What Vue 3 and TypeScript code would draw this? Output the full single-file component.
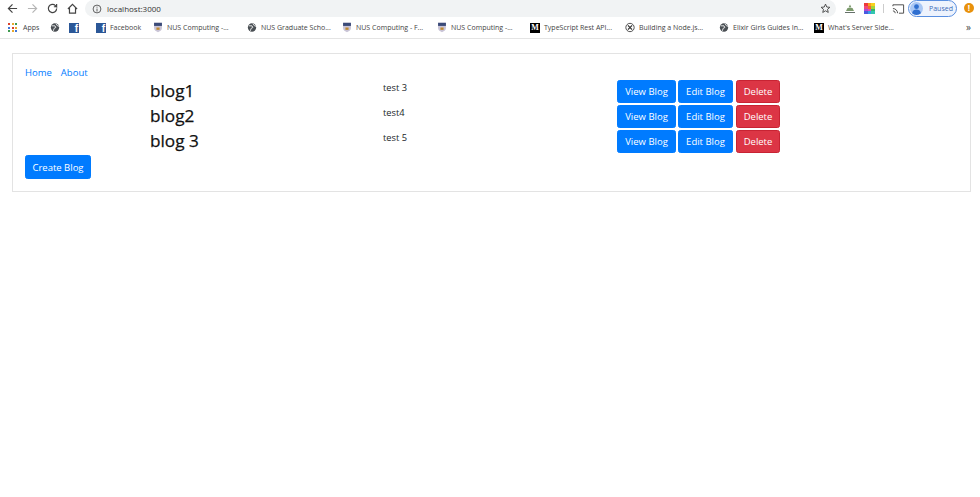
<script setup lang="ts">
interface Blog { title: string; body: string }
interface Mark { label: string; icon: string; width: number }
const blogs: Blog[] = [
  { title: 'blog1', body: 'test 3' },
  { title: 'blog2', body: 'test4' },
  { title: 'blog 3', body: 'test 5' },
]
const marks: Mark[] = [
  { label: 'Facebook', icon: 'fb', width: 57 },
  { label: 'NUS Computing -...', icon: 'nus', width: 94 },
  { label: 'NUS Graduate Scho...', icon: 'globe', width: 95 },
  { label: 'NUS Computing - F...', icon: 'nus', width: 95 },
  { label: 'NUS Computing -...', icon: 'nus', width: 93 },
  { label: 'TypeScript Rest API...', icon: 'm', width: 95 },
  { label: 'Building a Node.js...', icon: 'x', width: 94 },
  { label: 'Elixir Girls Guides In...', icon: 'globe', width: 95 },
  { label: "What's Server Side...", icon: 'm', width: 90 },
]
const appColors: string[] = ['#d9402b', '#e8a92b', '#3f9a4f', '#3f76d9', '#d9402b', '#e8a92b', '#3f9a4f', '#e8a92b', '#3f76d9']
const paletteColors: string[] = ['#ee3a3a', '#f7a01e', '#f7d11e', '#f04a7a', '#f46a2a', '#a6d33a', '#b04ad0', '#e84ab0', '#33b66a', '#4a5ae0', '#3a9ae8', '#33c6b0']
</script>

<template>
  <div class="page">
    <header class="chrome">
      <div class="toolbar">
        <svg class="tool" viewBox="0 0 12 12"><path d="M11 6H1.500M6 1.500 1.500 6 6 10.500" /></svg>
        <svg class="tool faded" viewBox="0 0 12 12"><path d="M1 6h9.500M6 1.500 10.500 6 6 10.500" /></svg>
        <svg class="tool" viewBox="0 0 12 12"><path d="M10.500 6a4.500 4.500 0 1 1-1.300-3.200l1.300 1.300V1M10.500 4.100H7.500" /></svg>
        <svg class="tool" viewBox="0 0 12 12"><path d="M1 6.500 6 1.500l5 5M2.700 5.500v5.500h6.600V5.500" /></svg>
        <div class="omnibox">
          <svg class="info" viewBox="0 0 12 12"><circle cx="6" cy="6" r="4.700" /><path d="M6 5.500V9M6 3.200v1.200" /></svg>
          <span class="url">localhost:3000</span>
          <svg class="star" viewBox="0 0 12 12"><path d="m6 1.200 1.400 3.200 3.400.3-2.600 2.200.8 3.400L6 8.500l-3 1.800.8-3.400L1.200 4.700l3.400-.3z" /></svg>
        </div>
        <svg class="ext" viewBox="0 0 12 12"><path d="m6 1.500 1.500 3h-3zM3.500 5h5l1.500 3H2z" fill="#7c9a6c" /><path d="M1 9.500h10" stroke="#66706a" /></svg>
        <div class="palette"><span v-for="(c, i) in paletteColors" :key="i" :style="{ background: c }"></span></div>
        <span class="divider"></span>
        <svg class="cast" viewBox="0 0 14 12"><path d="M1 3V1.500h11.500v9H7.500M1 5.500a5 5 0 0 1 5 5M1 8a2.500 2.500 0 0 1 2.500 2.500" /></svg>
        <div class="profile">
          <svg class="avatar" viewBox="0 0 14 14"><circle cx="7" cy="7" r="7" fill="#a9c7f5" /><circle cx="7" cy="5" r="2.600" fill="#2f6fd0" /><path d="M2.200 12c.6-3 2.500-4 4.800-4s4.200 1 4.800 4a7 7 0 0 1-9.600 0z" fill="#2f6fd0" /></svg>
          <span>Paused</span>
        </div>
        <span class="alert">!</span>
      </div>
      <div class="bookmarks">
        <div class="apps-grid"><span v-for="(c, i) in appColors" :key="i" :style="{ background: c }"></span></div>
        <span class="apps">Apps</span>
        <svg class="icon spaced" viewBox="0 0 12 12"><circle cx="6" cy="6" r="5" fill="#4a4f54" /><path d="M2 4h4l1 2-2 1-1 3M7 1.500 9 4l2 .5" stroke="#fff" fill="none" /></svg>
        <span class="fb small">f</span>
        <div class="mark" v-for="(m, i) in marks" :key="i" :style="{ width: m.width + 'px' }">
          <span v-if="m.icon === 'fb'" class="fb">f</span>
          <svg v-else-if="m.icon === 'nus'" class="icon" viewBox="0 0 12 14"><path d="M1 1h10v7c0 3-3 4-5 5-2-1-5-2-5-5z" fill="#c9c4d6" /><path d="M1 1h10v4H1z" fill="#3a4a78" /><path d="M4 7h4v3H4z" fill="#c08a30" /></svg>
          <svg v-else-if="m.icon === 'globe'" class="icon" viewBox="0 0 12 12"><circle cx="6" cy="6" r="5" fill="#4a4f54" /><path d="M2 4h4l1 2-2 1-1 3M7 1.500 9 4l2 .5" stroke="#fff" fill="none" /></svg>
          <span v-else-if="m.icon === 'm'" class="medium">M</span>
          <svg v-else class="icon" viewBox="0 0 12 12"><circle cx="6" cy="6" r="5" fill="none" stroke="#333" /><path d="m3.500 3.500 5 5M8.500 3.500l-5 5" stroke="#333" stroke-width="1.500" /></svg>
          <span class="label">{{ m.label }}</span>
        </div>
        <span class="more">»</span>
      </div>
    </header>

    <main class="card">
      <nav class="nav">
        <a href="#">Home</a>
        <a href="#">About</a>
      </nav>
      <div class="rows">
        <div class="row" v-for="b in blogs" :key="b.title">
          <h2>{{ b.title }}</h2>
          <p>{{ b.body }}</p>
          <div class="actions">
            <button class="btn primary">View Blog</button>
            <button class="btn primary">Edit Blog</button>
            <button class="btn danger">Delete</button>
          </div>
        </div>
      </div>
      <button class="btn primary create">Create Blog</button>
    </main>
  </div>
</template>

<style>
html, body { margin: 0; background: #fff; }
</style>

<style scoped>
.page { width: 980px; height: 497px; overflow: hidden; font-family: "Open Sans", "Noto Sans", sans-serif; color: #212529; }
.chrome { height: 39px; box-sizing: border-box; border-bottom: 1px solid #e4e4e4; }
.toolbar { height: 17px; display: flex; align-items: center; padding-left: 7px; position: relative; }
.tool { width: 11px; height: 11px; fill: none; stroke: #444; stroke-width: 1.300; margin-right: 9px; flex: none; }
.tool.faded { stroke: #b5b5b5; }
.omnibox { position: absolute; left: 85px; top: 0; width: 751px; height: 17px; border-radius: 9px; background: #f1f3f4; display: flex; align-items: center; padding-left: 7px; box-sizing: border-box; }
.info { width: 10px; height: 10px; fill: none; stroke: #444; }
.url { margin-left: 5px; font-size: 8px; color: #333; }
.star { width: 11px; height: 11px; fill: none; stroke: #444; position: absolute; right: 5px; top: 3px; }
.ext { position: absolute; left: 844px; top: 3px; width: 12px; height: 12px; }
.palette { position: absolute; left: 864px; top: 3px; width: 11px; height: 11px; display: grid; grid-template-columns: repeat(3, 1fr); grid-auto-rows: 1fr; }
.divider { position: absolute; left: 883px; top: 4px; width: 1px; height: 9px; background: #ccc; }
.cast { position: absolute; left: 892px; top: 3px; width: 13px; height: 12px; fill: none; stroke: #444; }
.profile { position: absolute; left: 908px; top: 0; width: 49px; height: 17px; box-sizing: border-box; border: 1px solid #5a8fe0; border-radius: 9px; background: #eef3fd; display: flex; align-items: center; gap: 6px; padding-left: 1px; font-size: 7px; color: #3a6cb8; }
.avatar { width: 13px; height: 13px; flex: none; }
.alert { position: absolute; left: 964px; top: 3px; width: 10px; height: 10px; border-radius: 50%; background: #e8910c; color: #fff; font-size: 8px; font-weight: 700; line-height: 10px; text-align: center; }
.bookmarks { height: 21px; display: flex; align-items: center; padding-left: 8px; position: relative; font-size: 7px; color: #444; }
.apps-grid { width: 9px; height: 9px; flex: none; display: grid; grid-template-columns: repeat(3, 2px); grid-auto-rows: 2px; gap: 1.500px; margin-right: 6px; }
.apps { width: 16px; margin-right: 11px; flex: none; }
.icon { width: 10px; height: 11px; flex: none; }
.spaced { margin-right: 9px; }
.fb { width: 10px; height: 10px; flex: none; background: #2b5797; color: #fff; font: 700 10px/11px "Liberation Sans", sans-serif; text-align: right; padding-right: 1px; box-sizing: border-box; }
.fb.small { margin-right: 17px; }
.medium { width: 10px; height: 10px; flex: none; background: #000; color: #fff; font: 700 8px/10px "Liberation Serif", serif; text-align: center; }
.mark { display: flex; align-items: center; gap: 4px; flex: none; white-space: nowrap; }
.label { white-space: nowrap; }
.more { position: absolute; left: 966px; top: 3px; font-size: 10px; }
.card { margin: 14px 9px 0 12px; height: 139px; box-sizing: border-box; border: 1px solid #e3e3e3; padding: 12px; }
.nav { display: flex; gap: 9px; font-size: 9.500px; line-height: 14px; height: 14px; }
.nav a { color: #007bff; text-decoration: none; }
.rows { display: flex; flex-direction: column; }
.row { height: 25px; padding-left: 125px; display: grid; grid-template-columns: 233px 234px 1fr; align-items: start; }
h2 { margin: -2px 0 0; font: 400 17.200px/25px "Open Sans", sans-serif; -webkit-text-stroke: 0.25px #111; color: #111; }
p { margin: 1px 0 0; font-size: 9.300px; line-height: 14px; color: #212529; }
.actions { display: flex; gap: 2px; }
.btn { display: block; height: 23px; padding: 0; border: 1px solid transparent; border-radius: 2.500px; color: #fff; font: 400 9.500px "Open Sans", sans-serif; }
.primary { background: #007bff; border-color: #007bff; }
.danger { background: #dc3545; border-color: #c82333; margin-left: 1px; width: 44px; }
.actions .primary:first-child { width: 59px; }
.actions .primary:nth-child(2) { width: 55px; }
.create { width: 66px; height: 24px; }
</style>
